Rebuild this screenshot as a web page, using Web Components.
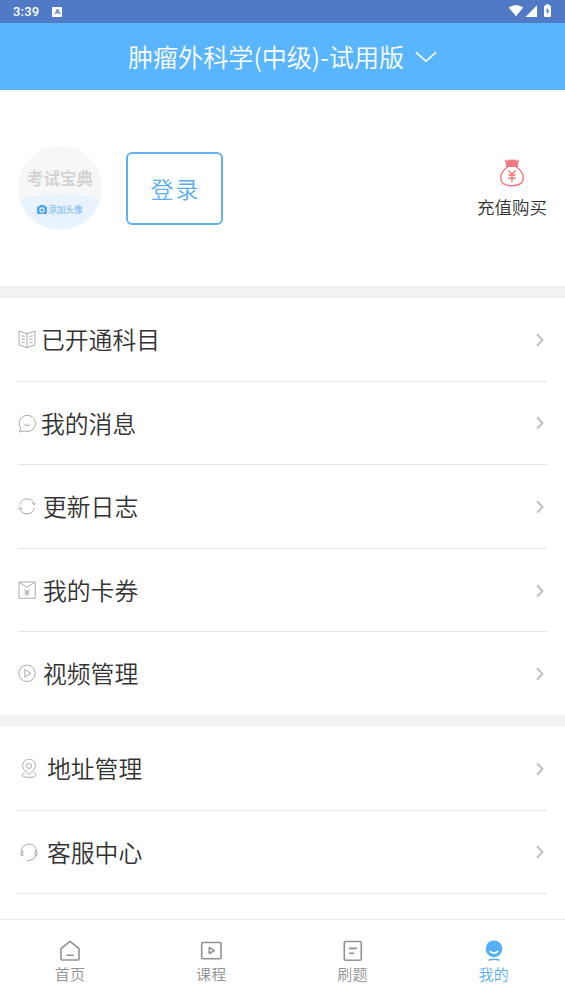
<!DOCTYPE html>
<html lang="zh-CN">
<head>
<meta charset="utf-8">
<title>我的</title>
<style>
html,body{margin:0;height:100%}
body{font-family:"Noto Sans CJK SC",sans-serif;font-weight:350;background:#fff;color:#333;overflow:hidden}
</style>
</head>
<body>
<profile-app></profile-app>
<script>
const ICONS = {
  book: '<path d="M9 3.700 1 1.200v13.600L9 17.600l8-2.800V1.200L9 3.700v13.900M3.300 5.600l3.400.9M3.300 8.800l3.400.9M3.300 12l3.400.9M11.300 6.500l3.400-.9M11.300 9.700l3.400-.9M11.300 12.900l3.400-.9"/>',
  message: '<path d="M2.900 14.300A8.100 8.100 0 1 1 6.300 16.900L1.400 18Z"/><path d="M6.300 10.600q2.700 2 5.400 0"/>',
  refresh: '<path d="M2 6.800A7.500 7.500 0 0 1 16.100 6.800M16.400 11A7.500 7.500 0 0 1 2 11.800M.4 12.600l1.500-2.300 2.100 1.700M14.200 6.300l2.100 1.500 1.300-2.300"/>',
  coupon: '<path d="M1 1h16.200v16.300H1ZM1.500 1.500 9 6.200l7.600-4.700M6.600 8 9 10.800 11.400 8M9 10.800v4.500M6.500 11h5M6.500 13h5"/>',
  video: '<circle cx="9" cy="9.300" r="8.200"/><path d="M6.800 5.500v7.600L13 9.300Z"/>',
  address: '<path d="M9 15.500C6 12.700 2.600 10 2.600 6.500a6.400 6.400 0 0 1 12.800 0C15.400 10 12 12.700 9 15.500Z"/><circle cx="9" cy="7" r="2.500"/><path d="M4.800 13.600c-5 1.500-3 4.800 4.200 4.800s9.200-3.300 4.200-4.800"/>',
  service: '<path d="M1.500 8.200C1.800 4 4.500 1.200 9 1.200s7.200 2.800 7.500 7M2.800 8Q.7 8 .7 10.400T2.800 13ZM15.200 8q2.100 0 2.100 2.400T15.200 13ZM15.600 13Q14.200 16.800 9.500 17.300M7 17.400h2.800"/>',
  home: '<path d="M2 8.700 11 1.300l9 7.400v10.300a1 1 0 0 1-1 1H3a1 1 0 0 1-1-1ZM7.300 15.200h7.400"/>',
  course: '<rect x="1.700" y="2.500" width="19.300" height="16.200" rx="1"/><path d="M9.300 7.500v6l5-3Z"/>',
  exam: '<rect x="2.300" y="1.500" width="17" height="18.800" rx="1.500"/><path d="M7 8.400h8M7 13.200h5"/>',
  me: '<circle cx="11" cy="8.800" r="8.400" fill="currentColor" stroke="none"/><path d="M6.800 11.200q4.200 4 8.400 0" stroke="#fff"/><path d="M5.600 20.300q2.500-1.100 5.400-1.100t5.400 1.100"/>'
};

class UiElement extends HTMLElement {
  connectedCallback() {
    if (this.shadowRoot) return;
    this.attachShadow({ mode: 'open' }).innerHTML = this.render();
  }
}

customElements.define('status-bar', class extends UiElement {
  render() { return `<style>
    :host{display:flex;align-items:center;justify-content:space-between;box-sizing:border-box;height:23px;flex:none;padding:0 13px;background:#5079c6;color:#fff;font:500 13px Roboto,sans-serif;letter-spacing:.2px}
    .side{display:flex;align-items:center}
    .badge{width:10px;height:10px;margin:0 0 0 13px;border-radius:1px;background:#fff;color:#5079c6;font:bold 8px/10px Roboto,sans-serif;text-align:center;letter-spacing:0}
    svg{display:block;margin-top:-1px}
    </style>
    <div class="side"><span>3:39</span><span class="badge">A</span></div>
    <svg width="44" height="16" viewBox="508 3 44 16" fill="#fff" stroke="none"><path d="M508.700 7.600Q516 2.500 523.200 7.600L516 16.300ZM537 5.200V17H525.500Z"/><path d="M546 4.200h3v1.300h1q1 0 1 1V16q0 1-1 1h-5q-1 0-1-1V6.500q0-1 1-1h1Z"/><path d="m548 7.500-2.200 4h1.500v3l2.100-4h-1.400Z" fill="#5079c6"/></svg>`; }
});

customElements.define('title-bar', class extends UiElement {
  render() { return `<style>
    :host{display:flex;align-items:center;justify-content:center;box-sizing:border-box;height:67px;flex:none;padding-bottom:1px;background:#5ab5ff;color:#fff;font-size:25.100px;line-height:36px}
    svg{margin:1px 0 0 11px}
    </style><span><slot></slot></span>
    <svg width="22" height="12" viewBox="0 0 22 12" fill="none" stroke="#fff" stroke-width="1.600"><path d="m.8 1.200 10.200 9 10.200-9"/></svg>`; }
});

customElements.define('user-avatar', class extends UiElement {
  render() { return `<style>
    :host{display:flex;flex-direction:column;align-items:center;box-sizing:border-box;width:84px;height:84px;border-radius:50%;overflow:hidden;background:radial-gradient(ellipse 70px 26px at 42px 74px,#e8f3ff 98%,#f7f7f7 100%)}
    b{margin-top:20px;font-size:16.500px;line-height:24px;color:#d4d4d4;font-weight:700}
    span{display:flex;align-items:center;gap:1px;margin-top:13px;font-size:8.600px;line-height:13px;color:#63aeea;white-space:nowrap}
    </style><b>考试宝典</b><span><svg width="10" height="9" viewBox="0 0 10 9"><path fill="#4da5eb" d="M3 0h4l1 1.500h1.200q.8 0 .8.800v5.900q0 .8-.8.800H.8q-.8 0-.8-.8V2.300q0-.8.8-.8H2Z"/><circle cx="5" cy="5" r="2.100" fill="none" stroke="#e8f3ff" stroke-width="1.100"/></svg>添加头像</span>`; }
});

customElements.define('profile-header', class extends UiElement {
  render() { return `<style>
    :host{display:flex;align-items:center;box-sizing:border-box;height:196px;flex:none;padding:0 18px}
    button{box-sizing:border-box;width:97px;height:73px;margin:1px 0 0 24px;padding:0 0 1px 2px;border:2px solid #63b2f0;border-radius:6px;background:#fff;color:#5aaef0;font:350 23px/34px "Noto Sans CJK SC",sans-serif;letter-spacing:2px}
    .pay{display:flex;flex-direction:column;align-items:center;margin:1px 0 0 auto;font-size:17.500px;line-height:26px}
    .pay svg{display:block;margin-bottom:6px}
    </style><user-avatar></user-avatar><button>登录</button>
    <div class="pay"><svg width="26" height="30" viewBox="0 0 26 30" fill="none" stroke="#f27980" stroke-width="1.500"><path fill="#f27980" stroke="none" d="M5.600 2 8.700 2.800 11 1.200l2 .7 2.200-.7L17.300 2.800l3-.8-1.500 3.800.5 3.200H6.700l.5-3.200Z"/><path d="M8.700 9C3.500 12.500 1.800 16.500 1.800 19.800c0 5 4.200 8 11.200 8s11.200-3 11.200-8c0-3.300-1.700-7.300-6.900-10.800M9.500 12.500l3.500 4 3.500-4M13 16.500V24M9.300 17h7.400M9.300 20.200h7.400" stroke-width="1.400"/></svg><span>充值购买</span></div>`; }
});

customElements.define('menu-group', class extends UiElement {
  render() { return `<style>
    :host{display:block;flex:none;border-top:12px solid #f2f2f2;padding:0 18px}
    </style><slot></slot>`; }
});

customElements.define('menu-row', class extends UiElement {
  render() { return `<style>
    :host{display:flex;align-items:center;box-sizing:border-box;height:83.600px;border-bottom:1px solid #e6e6e6;font-size:23.800px;line-height:34px}
    :host([last]){height:82.600px;border-bottom-color:transparent}
    .icon{width:18px;height:19px;flex:none;margin-top:1px;margin-left:${this.getAttribute('inset') || 0}px;margin-right:${this.getAttribute('gap') || 6}px}
    span{flex:1}
    .arrow{margin:1px 2px 0 0}
    </style><svg class="icon" viewBox="0 0 18 19" fill="none" stroke="#999" stroke-width=".85">${ICONS[this.getAttribute('icon')]}</svg><span><slot></slot></span>
    <svg class="arrow" width="9" height="14" viewBox="0 0 9 14" fill="none" stroke="#c0c0c0" stroke-width="2"><path d="m1 1.200 5.500 5.800-5.500 5.800"/></svg>`; }
});

customElements.define('tab-item', class extends UiElement {
  render() { return `<style>
    :host{display:flex;flex-direction:column;align-items:center;flex:1;padding:20px 1px 0 0;color:#929292;font-size:15px;line-height:22px;letter-spacing:.3px}
    :host([active]){color:#56b0f7}
    svg{display:block;margin-bottom:1px}
    </style><svg width="22" height="22" viewBox="0 0 22 22" fill="none" stroke="currentColor" stroke-width="1.600" stroke-linejoin="round">${ICONS[this.getAttribute('icon')]}</svg><span><slot></slot></span>`; }
});

customElements.define('tab-bar', class extends UiElement {
  render() { return `<style>
    :host{display:flex;box-sizing:border-box;height:85px;flex:none;margin-top:auto;border-top:1px solid #f0f0f0;box-shadow:0 -1px 1px #f7f7f7;background:#fff}
    </style><slot></slot>`; }
});

customElements.define('profile-app', class extends UiElement {
  render() { return `<style>
    :host{display:flex;flex-direction:column;height:1004px;overflow:hidden}
    </style>
    <status-bar></status-bar>
    <title-bar>肿瘤外科学(中级)-试用版</title-bar>
    <profile-header></profile-header>
    <menu-group>
      <menu-row icon="book" gap="5">已开通科目</menu-row>
      <menu-row icon="message" gap="5">我的消息</menu-row>
      <menu-row icon="refresh" gap="7">更新日志</menu-row>
      <menu-row icon="coupon" gap="7">我的卡券</menu-row>
      <menu-row icon="video" gap="7" last>视频管理</menu-row>
    </menu-group>
    <menu-group>
      <menu-row icon="address" inset="2" gap="9">地址管理</menu-row>
      <menu-row icon="service" inset="2" gap="9">客服中心</menu-row>
    </menu-group>
    <tab-bar>
      <tab-item icon="home">首页</tab-item>
      <tab-item icon="course">课程</tab-item>
      <tab-item icon="exam">刷题</tab-item>
      <tab-item icon="me" active>我的</tab-item>
    </tab-bar>`; }
});
</script>
</body>
</html>
